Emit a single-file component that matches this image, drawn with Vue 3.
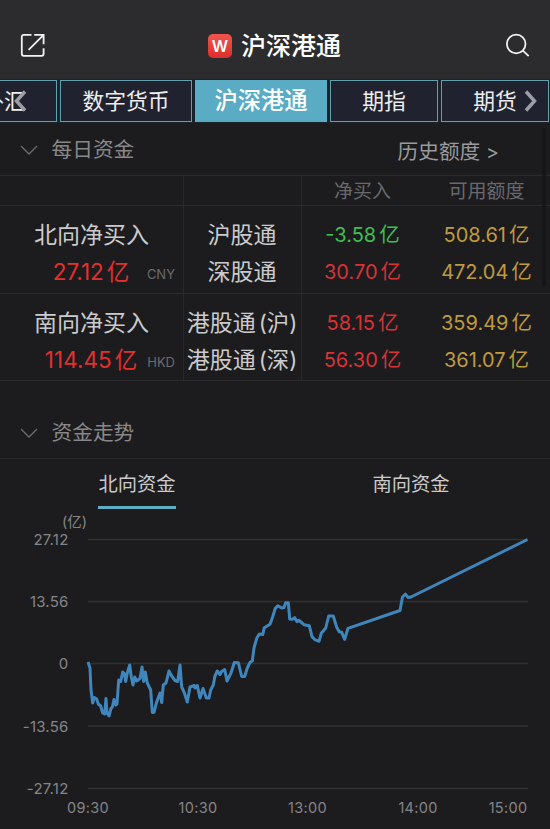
<script setup>
import { ref, computed } from "vue";

const tabs = ["外汇", "数字货币", "沪深港通", "期指", "期货"];
const activeTab = ref(2);
const trend = ref("north");

const groups = [
  {
    name: "北向净买入",
    total: "27.12",
    unit: "CNY",
    rows: [
      { name: "沪股通", net: "-3.58", quota: "508.61" },
      { name: "深股通", net: "30.70", quota: "472.04" },
    ],
  },
  {
    name: "南向净买入",
    total: "114.45",
    unit: "HKD",
    rows: [
      { name: "港股通", market: "(沪)", net: "58.15", quota: "359.49" },
      { name: "港股通", market: "(深)", net: "56.30", quota: "361.07" },
    ],
  },
];

const yAxis = [
  { label: "27.12", y: 29.5 },
  { label: "13.56", y: 91.5 },
  { label: "0", y: 153.5 },
  { label: "-13.56", y: 216 },
  { label: "-27.12", y: 278.5 },
];

const xAxis = [
  { label: "09:30", x: 88 },
  { label: "10:30", x: 198 },
  { label: "13:00", x: 307.5 },
  { label: "14:00", x: 418 },
  { label: "15:00", x: 508 },
];

// x, y pairs inside the 550 x 319 chart
const points = [
  [88, 152], [90, 158], [91, 180], [92.7, 193], [94.3, 187.5], [96.7, 189], [98.3, 194],
  [100.7, 196], [102.7, 203], [104.7, 204], [106, 188.5], [107, 203], [109, 206], [111, 198.5],
  [112.3, 197], [114, 189.5], [115.7, 195], [117, 194], [118.7, 170], [120.7, 171.5],
  [122.7, 162], [124.3, 163.5], [125.7, 171.5], [127.3, 163], [129.7, 155], [131.3, 167],
  [133, 175], [134.7, 167], [136.7, 171], [140, 168.5], [142, 157], [143.7, 171.5],
  [145.3, 162], [147.3, 173], [150.7, 180], [152.3, 202.5], [154, 202.5], [156.7, 192],
  [160, 183], [161.7, 192.5], [163.3, 175], [166, 173], [169, 161], [171.7, 166], [175, 170.5],
  [177.7, 171.5], [180, 155], [181.7, 177], [184, 182], [187.3, 192], [190, 177], [194.3, 175.5],
  [195, 178], [197.3, 175.5], [200, 188], [203, 178.5], [206.3, 188], [209, 188],
  [210.7, 180], [213.3, 175], [215, 166], [217.3, 161], [220, 164.5], [221.7, 161.5],
  [224.7, 159.5], [227, 171], [231, 163], [234.3, 152.5], [238.3, 152.7], [241.7, 166.5],
  [244.7, 166.5], [247.3, 158], [250, 152.3], [252.3, 151], [254, 138], [256.7, 128.3],
  [259.3, 124], [262.7, 124.6], [264.3, 117.7], [270, 114.3], [272.7, 106.7], [275.3, 98.3],
  [278, 95.7], [281.7, 98], [284, 97.6], [285.7, 92.7], [288.3, 92.7], [289.7, 109],
  [292.3, 109.3], [294.7, 107.7], [297, 111.7], [299, 110.3], [304, 114.7], [309.3, 115.7],
  [312, 126.7], [315, 129.7], [319, 131.3], [321.3, 123.3], [325.7, 118], [328.7, 106],
  [333.3, 106], [336.7, 117.3], [339.3, 121.7], [341.7, 122.3], [344.7, 129.3], [348, 118.3],
  [400, 100.5], [402.5, 87], [405.5, 84], [408, 87.5], [411, 87], [527.5, 29.5],
];

const linePoints = computed(() => points.map((p) => p.join(",")).join(" "));
</script>

<template>
  <div class="page">
    <header class="header">
      <svg class="share" width="26" height="26" viewBox="0 0 26 26">
        <path d="M11.5 1.8H3.8Q1.8 1.8 1.8 3.8V20.8Q1.8 22.8 3.8 22.8H21.6Q23.6 22.8 23.6 20.8V15.2M14.2 1.8H23.6V11.2M23.6 1.8L8.6 16.8" />
      </svg>
      <div class="title">
        <span class="logo">W</span>
        <h1>沪深港通</h1>
      </div>
      <svg class="search" width="26" height="26" viewBox="0 0 26 26">
        <circle cx="11.2" cy="11" r="9.3" />
        <path d="M17.9 17.6L23.7 23.1" />
      </svg>
    </header>

    <nav class="tabs">
      <button
        v-for="(tab, i) in tabs"
        :key="tab"
        class="tab"
        :class="['tab-' + i, { active: activeTab === i }]"
        @click="activeTab = i"
      >
        {{ tab }}
      </button>
      <svg class="arrow arrow-left" width="14" height="22" viewBox="0 0 14 22">
        <path d="M12 1.5L3.5 11L12 20.5" />
      </svg>
      <svg class="arrow arrow-right" width="14" height="22" viewBox="0 0 14 22">
        <path d="M2 1.5L10.5 11L2 20.5" />
      </svg>
    </nav>

    <section class="daily">
      <div class="scrollbar"></div>
      <div class="section-head">
        <svg class="chevron" width="18" height="11" viewBox="0 0 18 11">
          <path d="M1 1L9 9L17 1" />
        </svg>
        <h2>每日资金</h2>
        <a class="history">历史额度 <span class="more">&gt;</span></a>
      </div>

      <div class="row row-head">
        <div class="cell"></div>
        <div class="cell"></div>
        <div class="cell figures">
          <span>净买入</span>
          <span>可用额度</span>
        </div>
      </div>

      <div v-for="group in groups" :key="group.name" class="row row-data">
        <div class="cell summary">
          <span class="name">{{ group.name }}</span>
          <span class="total">{{ group.total }}<i>亿</i></span>
          <span class="unit">{{ group.unit }}</span>
        </div>
        <div class="cell channels">
          <span v-for="item in group.rows" :key="item.quota">
            {{ item.name }}<i v-if="item.market">{{ item.market }}</i>
          </span>
        </div>
        <div class="cell figures">
          <template v-for="item in group.rows" :key="item.quota">
            <span :class="item.net.startsWith('-') ? 'down' : 'up'">{{ item.net }}<i>亿</i></span>
            <span class="quota">{{ item.quota }}<i>亿</i></span>
          </template>
        </div>
      </div>
    </section>

    <section class="trend">
      <div class="section-head">
        <svg class="chevron" width="18" height="11" viewBox="0 0 18 11">
          <path d="M1 1L9 9L17 1" />
        </svg>
        <h2>资金走势</h2>
      </div>

      <div class="trend-tabs">
        <div class="trend-col">
          <button :class="{ on: trend === 'north' }" @click="trend = 'north'">北向资金</button>
        </div>
        <div class="trend-col">
          <button :class="{ on: trend === 'south' }" @click="trend = 'south'">南向资金</button>
        </div>
      </div>

      <svg class="chart" width="550" height="319" viewBox="0 0 550 319">
        <text class="axis" x="87" y="17" text-anchor="end">(亿)</text>
        <g v-for="tick in yAxis" :key="tick.label">
          <line class="grid" x1="88" x2="528" :y1="tick.y" :y2="tick.y" />
          <text class="axis value" x="68.5" :y="tick.y + 5.5" text-anchor="end">{{ tick.label }}</text>
        </g>
        <text v-for="tick in xAxis" :key="tick.label" class="axis time" :x="tick.x" y="303" text-anchor="middle">
          {{ tick.label }}
        </text>
        <polyline class="line" :points="linePoints" />
      </svg>
    </section>
  </div>
</template>

<style>
body {
  margin: 0;
  background: #1c1c1e;
}
</style>

<style scoped>
* {
  box-sizing: border-box;
}

.page {
  width: 550px;
  height: 829px;
  overflow: hidden;
  background: #1c1c1e;
  color: #cbcbcd;
  font-family: Inter, "Noto Sans CJK SC", sans-serif;
}

h1,
h2 {
  margin: 0;
  font-weight: 400;
}

i {
  font-style: normal;
}

button {
  padding: 0;
  border: none;
  background: none;
  color: inherit;
  font-family: inherit;
  cursor: pointer;
}

svg {
  display: block;
  fill: none;
}

/* Header */
.header {
  display: flex;
  justify-content: space-between;
  align-items: center;
  height: 79px;
  padding: 13px 19px 0 20px;
  background: #2c2c2e;
}

.share,
.search {
  stroke: #f2f2f2;
  stroke-width: 1.8;
}

.title {
  display: flex;
  align-items: center;
  gap: 9px;
  margin-right: 2px;
}

.logo {
  width: 24px;
  height: 24px;
  border-radius: 5px;
  background: linear-gradient(#f0564c, #dd2f2b);
  color: #fff;
  font-size: 16px;
  font-weight: 600;
  line-height: 24px;
  text-align: center;
}

.title h1 {
  color: #fff;
  font-size: 25px;
  font-weight: 500;
  line-height: 32px;
}

/* Market tabs */
.tabs {
  position: relative;
  display: flex;
  gap: 3px;
  height: 45px;
  padding-top: 1px;
  background: linear-gradient(#18242c 43px, #1c1c1e 45px);
  overflow: hidden;
}

.tab {
  flex: none;
  width: 108px;
  height: 42px;
  border: 1.5px solid #62a0ae;
  background: #20222f;
  color: #eee;
  font-size: 21.8px;
  line-height: 36px;
}

.tab-0 {
  width: 108px;
  margin-left: -51px;
  padding-left: 2px;
}

.tab-1,
.tab-2 {
  width: 132px;
}

.tab.active {
  border-color: #5aacc4;
  background: #5aacc4;
  color: #fff;
  font-size: 23.3px;
  font-weight: 500;
}

.arrow {
  position: absolute;
  top: 11px;
  stroke: #9c9da5;
  stroke-width: 3.5;
}

.arrow-left {
  left: 13px;
}

.arrow-right {
  right: 12px;
}

/* Section heads */
.section-head {
  display: flex;
  align-items: center;
  height: 51px;
  padding: 1px 51px 0 20px;
  color: #88888a;
}

.chevron {
  stroke: #6c6c6e;
  stroke-width: 1.3;
}

.section-head h2 {
  margin-left: 13.5px;
  font-size: 20.7px;
  line-height: 30px;
}

.history {
  margin-left: auto;
  color: #9a9a9c;
  font-size: 20.7px;
}

.more {
  font-size: 19.5px;
}

/* Daily table */
.daily {
  position: relative;
}

.scrollbar {
  position: absolute;
  top: 4px;
  right: 4px;
  width: 4px;
  height: 158px;
  border-radius: 2px;
  background: #161618;
}

.row {
  display: grid;
  grid-template-columns: 183px 118px 249px;
  border-top: 1px solid #2b2b2d;
}

.row:last-child {
  border-bottom: 1px solid #2b2b2d;
}

.cell + .cell {
  border-left: 1px solid #29292b;
}

.row-head {
  height: 30px;
  color: #69696d;
  font-size: 19px;
  line-height: 31px;
}

.row-data {
  height: 88px;
  font-size: 23px;
  line-height: 36.5px;
}

.row-data .cell {
  padding-top: 11px;
}

.summary {
  display: grid;
  grid-template-columns: 114px 1fr;
  grid-auto-rows: 36.5px;
  padding-left: 34px;
  padding-right: 8px;
  text-align: center;
}

.summary .name {
  grid-column: 1 / -1;
  justify-self: start;
}

.total {
  color: #e3302f;
  font-size: 22.5px;
  line-height: 35.5px;
}

.total i {
  margin-left: 3px;
  font-size: 22.5px;
}

.unit {
  margin-left: -4px;
  color: #6b6b6e;
  font-size: 13px;
  line-height: 40px;
  text-align: right;
}

.channels {
  display: flex;
  flex-direction: column;
  text-align: center;
  white-space: nowrap;
}

.row-data .channels {
  padding-right: 1px;
}

.channels i {
  margin-left: 3px;
  font-size: 22.3px;
}

.figures {
  display: grid;
  grid-template-columns: 121px 1fr;
  text-align: center;
}

.row-data .figures {
  grid-auto-rows: 36.5px;
  font-size: 20px;
}

.figures i {
  margin-left: 3px;
  font-size: 20.5px;
}

.up {
  color: #d93236;
}

.down {
  color: #3fbf50;
}

.quota {
  color: #c09a3e;
}

/* Trend */
.trend {
  padding-top: 26px;
}

.trend-tabs {
  display: flex;
  height: 52px;
  padding-right: 2px;
  border-top: 1px solid #29292b;
}

.trend-col {
  display: flex;
  flex: 1;
  justify-content: center;
}

.trend-tabs button {
  height: 50px;
  padding-top: 4px;
  border-bottom: 3px solid transparent;
  color: #cbcbcd;
  font-size: 19.3px;
  line-height: 43px;
}

.trend-tabs .on {
  border-bottom-color: #5fb0c6;
}

.axis {
  fill: #858588;
  font-size: 14.5px;
}

.value {
  font-size: 15px;
  letter-spacing: 0.2px;
}

.time {
  letter-spacing: 0.3px;
}

.grid {
  stroke: #303032;
  stroke-width: 1.5;
}

.line {
  stroke: #3f86bd;
  stroke-width: 3;
  stroke-linejoin: round;
}
</style>
